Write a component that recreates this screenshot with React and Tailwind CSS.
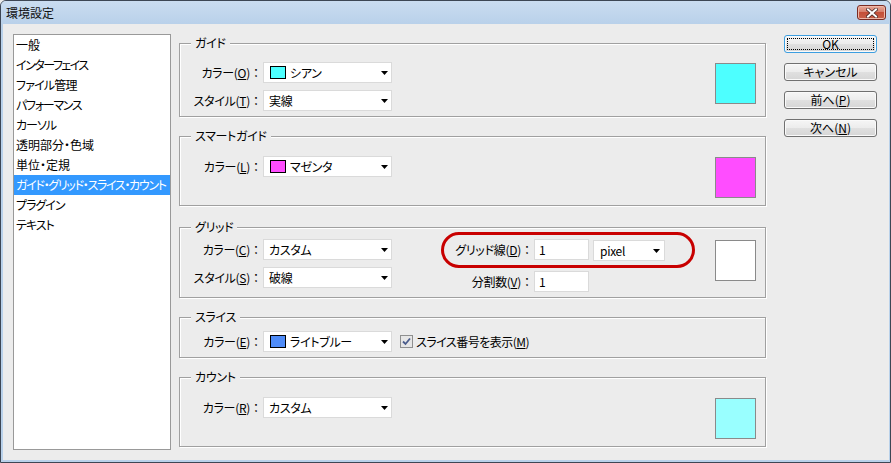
import React from "react";

function U({ c }) {
  return <span className="underline underline-offset-1">{c}</span>;
}

function Colon() {
  return <span className="[font-feature-settings:normal] tracking-normal">：</span>;
}

function Label({ pre, k, w = "w-[82px]" }) {
  return (
    <span className={`${w} shrink-0 text-right whitespace-nowrap leading-[21px] tracking-[-0.3px]`}>
      {pre}(<U c={k} />)<Colon />
    </span>
  );
}

function Arrow() {
  return (
    <svg className="ml-auto shrink-0" width="7" height="4" viewBox="0 0 7 4">
      <path d="M0 0H7L3.5 4Z" fill="#000" />
    </svg>
  );
}

function Combo({ swatch, text, w = "w-[129px]", pl = "pl-[5px]", pr = "pr-[3px]", ml = "ml-[1px]" }) {
  return (
    <div className={`h-[21px] ${w} shrink-0 bg-white border border-[#dadada] flex items-center ${pl} ${pr} ${ml}`}>
      {swatch && <span className={`w-[16px] h-[13px] ml-[1px] mr-[4px] border border-black ${swatch}`} />}
      <span className="leading-none whitespace-nowrap tracking-[-0.3px]">{text}</span>
      <Arrow />
    </div>
  );
}

function Input({ v }) {
  return (
    <div className="h-[21px] w-[55px] shrink-0 bg-white border border-[#dadada] flex items-center pl-[4px] ml-[1px]">
      <span className="leading-none">{v}</span>
    </div>
  );
}

function Swatch({ color, mt }) {
  return <div className={`ml-auto mr-[9px] w-[41px] h-[41px] shrink-0 border border-[#8a8a8a] ${color} ${mt}`} />;
}

function Group({ title, className, children }) {
  return (
    <div className={`relative w-[587px] border border-[#a0a0a0] shadow-[inset_1px_1px_0_#fff,1px_1px_0_#fff] flex items-start ${className}`}>
      <span className="absolute left-[11px] -top-[9px] px-[4px] bg-[#ececec] leading-[16px] whitespace-nowrap tracking-[-0.3px]">{title}</span>
      {children}
    </div>
  );
}

function Btn({ children, def }) {
  return (
    <div
      className={`h-[18px] w-[93px] rounded-[3px] border ${def ? "border-[#3c9ee0]" : "border-[#707070]"} bg-[linear-gradient(#f6f6f6,#ececec_50%,#e0e0e0_50%,#d6d6d6)] shadow-[inset_0_0_0_1px_#fafafa] flex p-[2px]`}
    >
      <div className={`flex-1 flex items-center justify-center leading-none ${def ? "border border-dotted border-black" : ""}`}>{children}</div>
    </div>
  );
}

export default function App() {
  const items = [
    ["一般", "tracking-normal"],
    ["インターフェイス", "tracking-[-1.5px]"],
    ["ファイル管理", "tracking-[-0.8px]"],
    ["パフォーマンス", "tracking-[-1.3px]"],
    ["カーソル", "tracking-[-1px]"],
    ["透明部分・色域", "tracking-normal"],
    ["単位・定規", "tracking-normal"],
    ["ガイド・グリッド・スライス・カウント", "tracking-[-1.3px]"],
    ["プラグイン", "tracking-[-1px]"],
    ["テキスト", "tracking-[-1px]"],
  ];
  return (
    <div className="w-[891px] h-[463px] bg-[#ececec]">
      <div className="w-full h-full rounded-t-[6px] border border-[#3d4654] bg-[#b9d1ea] flex flex-col font-['Noto_Sans_CJK_JP',sans-serif] text-[12px] text-black [font-feature-settings:'palt']">
        <div className="h-[23px] shrink-0 flex items-center pl-[5px] pr-[4px] rounded-t-[5px] bg-gradient-to-b from-[#cadcf0] to-[#b9d1ea]">
          <span className="leading-none text-[#111]">環境設定</span>
          <div className="ml-auto w-[29px] h-[15px] rounded-[3px] border border-[#7a2b22] bg-[linear-gradient(#e8a898,#d47a66_50%,#c44f38_50%,#c8604a)] shadow-[inset_0_0_0_1px_#eeb8a8] flex items-center justify-center">
            <svg width="12" height="10" viewBox="0 0 12 10">
              <path d="M2 1.5L10 8.5M10 1.5L2 8.5" stroke="#4a2a26" strokeWidth="3.6" strokeLinecap="square" />
              <path d="M2 1.5L10 8.5M10 1.5L2 8.5" stroke="#fff" strokeWidth="2" strokeLinecap="square" />
            </svg>
          </div>
        </div>
        <div className="flex-1 ml-[2px] mr-[1px] mb-[2px] bg-[#ececec] flex items-start">
          {/* list */}
          <div className="ml-[10px] mt-[10px] w-[158px] h-[416px] shrink-0 bg-white border border-[#999999] flex flex-col overflow-hidden">
            {items.map(([t, tr], i) => (
              <div
                key={t}
                className={`h-[20px] leading-[20px] pl-[2px] whitespace-nowrap ${tr} ${i === 7 ? "bg-[#3399ff] text-white" : ""}`}
              >
                {t}
              </div>
            ))}
          </div>

          {/* groups */}
          <div className="ml-[8px] mt-[19px] flex flex-col shrink-0">
            <Group title="ガイド" className="h-[74px] pt-[18px]">
              <div className="flex flex-col gap-[7px]">
                <div className="flex items-center">
                  <Label pre="カラー" k="O" />
                  <Combo swatch="bg-[#4dffff]" text="シアン" />
                </div>
                <div className="flex items-center">
                  <Label pre="スタイル" k="T" />
                  <Combo text="実線" />
                </div>
              </div>
              <Swatch color="bg-[#4dffff]" mt="mt-[1px]" />
            </Group>

            <Group title="スマートガイド" className="h-[70px] pt-[19px] mt-[19px]">
              <div className="flex items-center">
                <Label pre="カラー" k="L" />
                <Combo swatch="bg-[#ff4dff]" text="マゼンタ" />
              </div>
              <Swatch color="bg-[#ff4dff]" mt="mt-[1px]" />
            </Group>

            <Group title="グリッド" className="h-[71px] pt-[11px] mt-[21px]">
              <div className="flex flex-col gap-[7px]">
                <div className="flex items-center">
                  <Label pre="カラー" k="C" />
                  <Combo text="カスタム" />
                </div>
                <div className="flex items-center">
                  <Label pre="スタイル" k="S" />
                  <Combo text="破線" />
                </div>
              </div>
              <div className="ml-[48px] flex flex-col gap-[10px]">
                <div className="flex items-start">
                  <Label pre="グリッド線" k="D" w="w-[93px]" />
                  <Input v="1" />
                  <div className="mt-[1px] ml-[4px]">
                    <Combo text="pixel" w="w-[72px]" pl="pl-[6px]" pr="pr-[4px]" ml="ml-0" />
                  </div>
                </div>
                <div className="flex items-center">
                  <Label pre="分割数" k="V" w="w-[93px]" />
                  <Input v="1" />
                </div>
              </div>
              <Swatch color="bg-white" mt="mt-[1px]" />
              <div className="absolute left-[261px] top-[4px] w-[254px] h-[36px] rounded-full border-[3px] border-[#c80000]" />
            </Group>

            <Group title="スライス" className="h-[41px] pt-[13px] mt-[19px]">
              <div className="flex items-center">
                <Label pre="カラー" k="E" />
                <Combo swatch="bg-[#4f8cf8]" text="ライトブルー" />
                <div className="ml-[8px] w-[13px] h-[13px] border border-[#8e8f8f] bg-[#e6e6e6] flex items-center justify-center">
                  <svg width="9" height="9" viewBox="0 0 9 9">
                    <path d="M1 4.5L3.5 7L8 1.5" stroke="#4a5c8c" strokeWidth="1.8" fill="none" />
                  </svg>
                </div>
                <span className="ml-[3px] whitespace-nowrap leading-none tracking-[-0.5px]">
                  スライス番号を表示(<U c="M" />)
                </span>
              </div>
            </Group>

            <Group title="カウント" className="h-[70px] pt-[19px] mt-[19px]">
              <div className="flex items-center">
                <Label pre="カラー" k="R" />
                <Combo text="カスタム" />
              </div>
              <Swatch color="bg-[#99ffff]" mt="mt-[1px]" />
            </Group>
          </div>

          {/* buttons */}
          <div className="ml-[18px] mt-[11px] flex flex-col gap-[10px] shrink-0">
            <Btn def>OK</Btn>
            <Btn>キャンセル</Btn>
            <Btn>
              前へ(<U c="P" />)
            </Btn>
            <Btn>
              次へ(<U c="N" />)
            </Btn>
          </div>
        </div>
      </div>
    </div>
  );
}
